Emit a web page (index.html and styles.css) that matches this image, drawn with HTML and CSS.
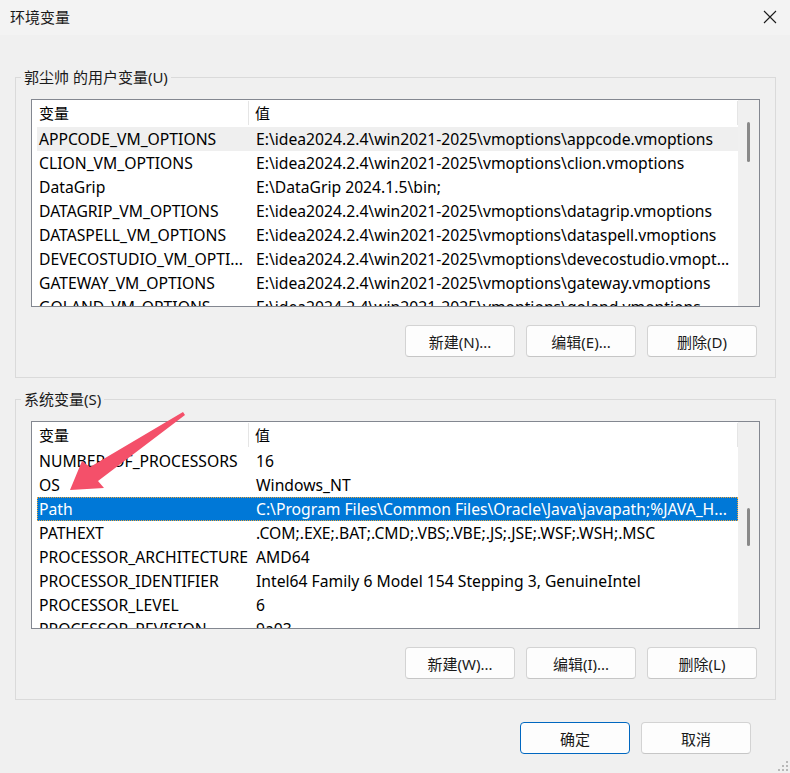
FILE: index.html
```html
<!DOCTYPE html>
<html lang="zh-CN">
<head>
<meta charset="utf-8">
<title>环境变量</title>
<link rel="stylesheet" href="styles.css">
</head>
<body>
<div class="window">
  <div class="titlebar">
    <span class="title">环境变量</span>
    <svg class="close" width="14" height="14" viewBox="0 0 14 14"><path d="M1 1 L13 13 M13 1 L1 13" stroke="#1a1a1a" stroke-width="1.1" fill="none"/></svg>
  </div>
  <div class="content">
    <fieldset class="group">
      <legend>郭尘帅 的用户变量(U)</legend>
      <div class="group-body">
        <div class="list">
          <div class="list-main">
            <div class="header"><div class="h1">变量</div><div class="h2">值</div></div>
            <div class="row hover"><div class="c1">APPCODE_VM_OPTIONS</div><div class="c2">E:\idea2024.2.4\win2021-2025\vmoptions\appcode.vmoptions</div></div>
            <div class="row"><div class="c1">CLION_VM_OPTIONS</div><div class="c2">E:\idea2024.2.4\win2021-2025\vmoptions\clion.vmoptions</div></div>
            <div class="row"><div class="c1">DataGrip</div><div class="c2">E:\DataGrip 2024.1.5\bin;</div></div>
            <div class="row"><div class="c1">DATAGRIP_VM_OPTIONS</div><div class="c2">E:\idea2024.2.4\win2021-2025\vmoptions\datagrip.vmoptions</div></div>
            <div class="row"><div class="c1">DATASPELL_VM_OPTIONS</div><div class="c2">E:\idea2024.2.4\win2021-2025\vmoptions\dataspell.vmoptions</div></div>
            <div class="row"><div class="c1">DEVECOSTUDIO_VM_OPTI...</div><div class="c2">E:\idea2024.2.4\win2021-2025\vmoptions\devecostudio.vmopt...</div></div>
            <div class="row"><div class="c1">GATEWAY_VM_OPTIONS</div><div class="c2">E:\idea2024.2.4\win2021-2025\vmoptions\gateway.vmoptions</div></div>
            <div class="row"><div class="c1">GOLAND_VM_OPTIONS</div><div class="c2">E:\idea2024.2.4\win2021-2025\vmoptions\goland.vmoptions</div></div>
          </div>
          <div class="scrollbar"><div class="thumb thumb-user"></div></div>
        </div>
        <div class="btn-row">
          <button class="btn">新建(N)...</button>
          <button class="btn">编辑(E)...</button>
          <button class="btn">删除(D)</button>
        </div>
      </div>
    </fieldset>

    <fieldset class="group group-sys">
      <legend>系统变量(S)</legend>
      <div class="group-body">
        <div class="list">
          <div class="list-main">
            <div class="header"><div class="h1">变量</div><div class="h2">值</div></div>
            <div class="row"><div class="c1">NUMBER_OF_PROCESSORS</div><div class="c2">16</div></div>
            <div class="row"><div class="c1">OS</div><div class="c2">Windows_NT</div></div>
            <div class="row selected"><div class="c1">Path</div><div class="c2">C:\Program Files\Common Files\Oracle\Java\javapath;%JAVA_H...</div></div>
            <div class="row"><div class="c1">PATHEXT</div><div class="c2">.COM;.EXE;.BAT;.CMD;.VBS;.VBE;.JS;.JSE;.WSF;.WSH;.MSC</div></div>
            <div class="row"><div class="c1">PROCESSOR_ARCHITECTURE</div><div class="c2">AMD64</div></div>
            <div class="row"><div class="c1">PROCESSOR_IDENTIFIER</div><div class="c2">Intel64 Family 6 Model 154 Stepping 3, GenuineIntel</div></div>
            <div class="row"><div class="c1">PROCESSOR_LEVEL</div><div class="c2">6</div></div>
            <div class="row"><div class="c1">PROCESSOR_REVISION</div><div class="c2">9a03</div></div>
          </div>
          <div class="scrollbar"><div class="thumb thumb-sys"></div></div>
        </div>
        <div class="btn-row">
          <button class="btn">新建(W)...</button>
          <button class="btn">编辑(I)...</button>
          <button class="btn">删除(L)</button>
        </div>
      </div>
    </fieldset>

    <div class="footer">
      <button class="btn btn-default">确定</button>
      <button class="btn">取消</button>
    </div>
  </div>

  <svg class="annotation" width="790" height="773" viewBox="0 0 790 773">
    <path d="M70 490 L82 461 L90 467 L183 412 L185 415 L98 481 L104 488 Z" fill="#f4506a"/>
  </svg>
  <svg class="grip" width="14" height="14" viewBox="0 0 14 14">
    <rect x="11" y="3" width="2" height="2" fill="#b8b8b8"/>
    <rect x="7" y="7" width="2" height="2" fill="#b8b8b8"/>
    <rect x="11" y="7" width="2" height="2" fill="#b8b8b8"/>
    <rect x="3" y="11" width="2" height="2" fill="#b8b8b8"/>
    <rect x="7" y="11" width="2" height="2" fill="#b8b8b8"/>
    <rect x="11" y="11" width="2" height="2" fill="#b8b8b8"/>
  </svg>
</div>
</body>
</html>
```

FILE: styles.css
```css
html, body {
  margin: 0;
  padding: 0;
}

body {
  background: #f0f0f0;
  font-family: "Noto Sans", "Noto Sans CJK SC", sans-serif;
  font-size: 15px;
  color: #000;
}

.window {
  position: relative;
  width: 790px;
  height: 773px;
  overflow: hidden;
  display: flex;
  flex-direction: column;
}

.titlebar {
  height: 35px;
  flex: none;
  box-sizing: border-box;
  background: #f3f3f3;
  display: flex;
  align-items: center;
  justify-content: space-between;
  padding: 0 13px 2px 10px;
}

.title {
  font-size: 15px;
  color: #1a1a1a;
}

.close {
  display: block;
}

.content {
  display: flex;
  flex-direction: column;
  padding: 32px 14px 0 15px;
}

.group {
  margin: 0;
  padding: 0;
  border: 1px solid #dadada;
  min-width: 0;
}

.group-sys {
  margin-top: 11px;
}

.group legend {
  margin-left: 5px;
  padding: 0 3px;
  line-height: 20px;
  font-size: 15px;
  color: #1a1a1a;
}

.group-body {
  padding: 12px 15px 20px 15px;
}

.list {
  height: 208px;
  box-sizing: border-box;
  border: 1px solid #838790;
  background: #fff;
  display: flex;
}

.list-main {
  flex: 1;
  min-width: 0;
  overflow: hidden;
}

.header {
  display: flex;
  height: 26px;
  line-height: 26px;
  margin-bottom: 1px;
}

.h1 {
  width: 217px;
  flex: none;
  box-sizing: border-box;
  padding-left: 7px;
  border-right: 1px solid #e5e5e5;
  margin: 1px 0 1px;
  line-height: 24px;
}

.h2 {
  flex: 1;
  padding-left: 6px;
  border-right: 1px solid #e5e5e5;
  margin: 1px 0 1px;
  line-height: 24px;
}

.row {
  display: flex;
  height: 24px;
  line-height: 24px;
  margin-left: 5px;
  white-space: nowrap;
  font-size: 15.7px;
}

.row.hover {
  background: #efefef;
}

.row.selected {
  background: #0078d7;
  color: #fff;
  outline: 1px dotted #f0a53a;
  outline-offset: -1px;
}

.c1 {
  width: 212px;
  flex: none;
  box-sizing: border-box;
  padding-left: 2px;
  overflow: hidden;
}

.c2 {
  flex: 1;
  min-width: 0;
  padding-left: 7px;
  overflow: hidden;
}

.scrollbar {
  width: 21px;
  flex: none;
  background: #f0f0f0;
  display: flex;
  flex-direction: column;
  align-items: center;
}

.thumb {
  width: 3px;
  border-radius: 2px;
  background: #898989;
}

.thumb-user {
  margin-top: 22px;
  height: 40px;
}

.thumb-sys {
  margin-top: 86px;
  height: 38px;
}

.btn-row {
  display: flex;
  justify-content: flex-end;
  gap: 11px;
  margin-top: 18px;
  padding-right: 3px;
}

.btn {
  width: 110px;
  height: 32px;
  box-sizing: border-box;
  border: 1px solid #d3d3d3;
  border-bottom-color: #c6c6c6;
  border-radius: 4px;
  background: #fdfdfd;
  font-family: "Noto Sans", "Noto Sans CJK SC", sans-serif;
  font-size: 15px;
  color: #1a1a1a;
  padding: 0;
}

.btn-default {
  border: 1px solid #0067c0;
}

.footer {
  display: flex;
  justify-content: flex-end;
  gap: 11px;
  margin-top: 22px;
  padding-right: 25px;
}

.annotation {
  position: absolute;
  left: 0;
  top: 0;
  pointer-events: none;
}

.grip {
  position: absolute;
  right: 1px;
  bottom: 1px;
}
```
